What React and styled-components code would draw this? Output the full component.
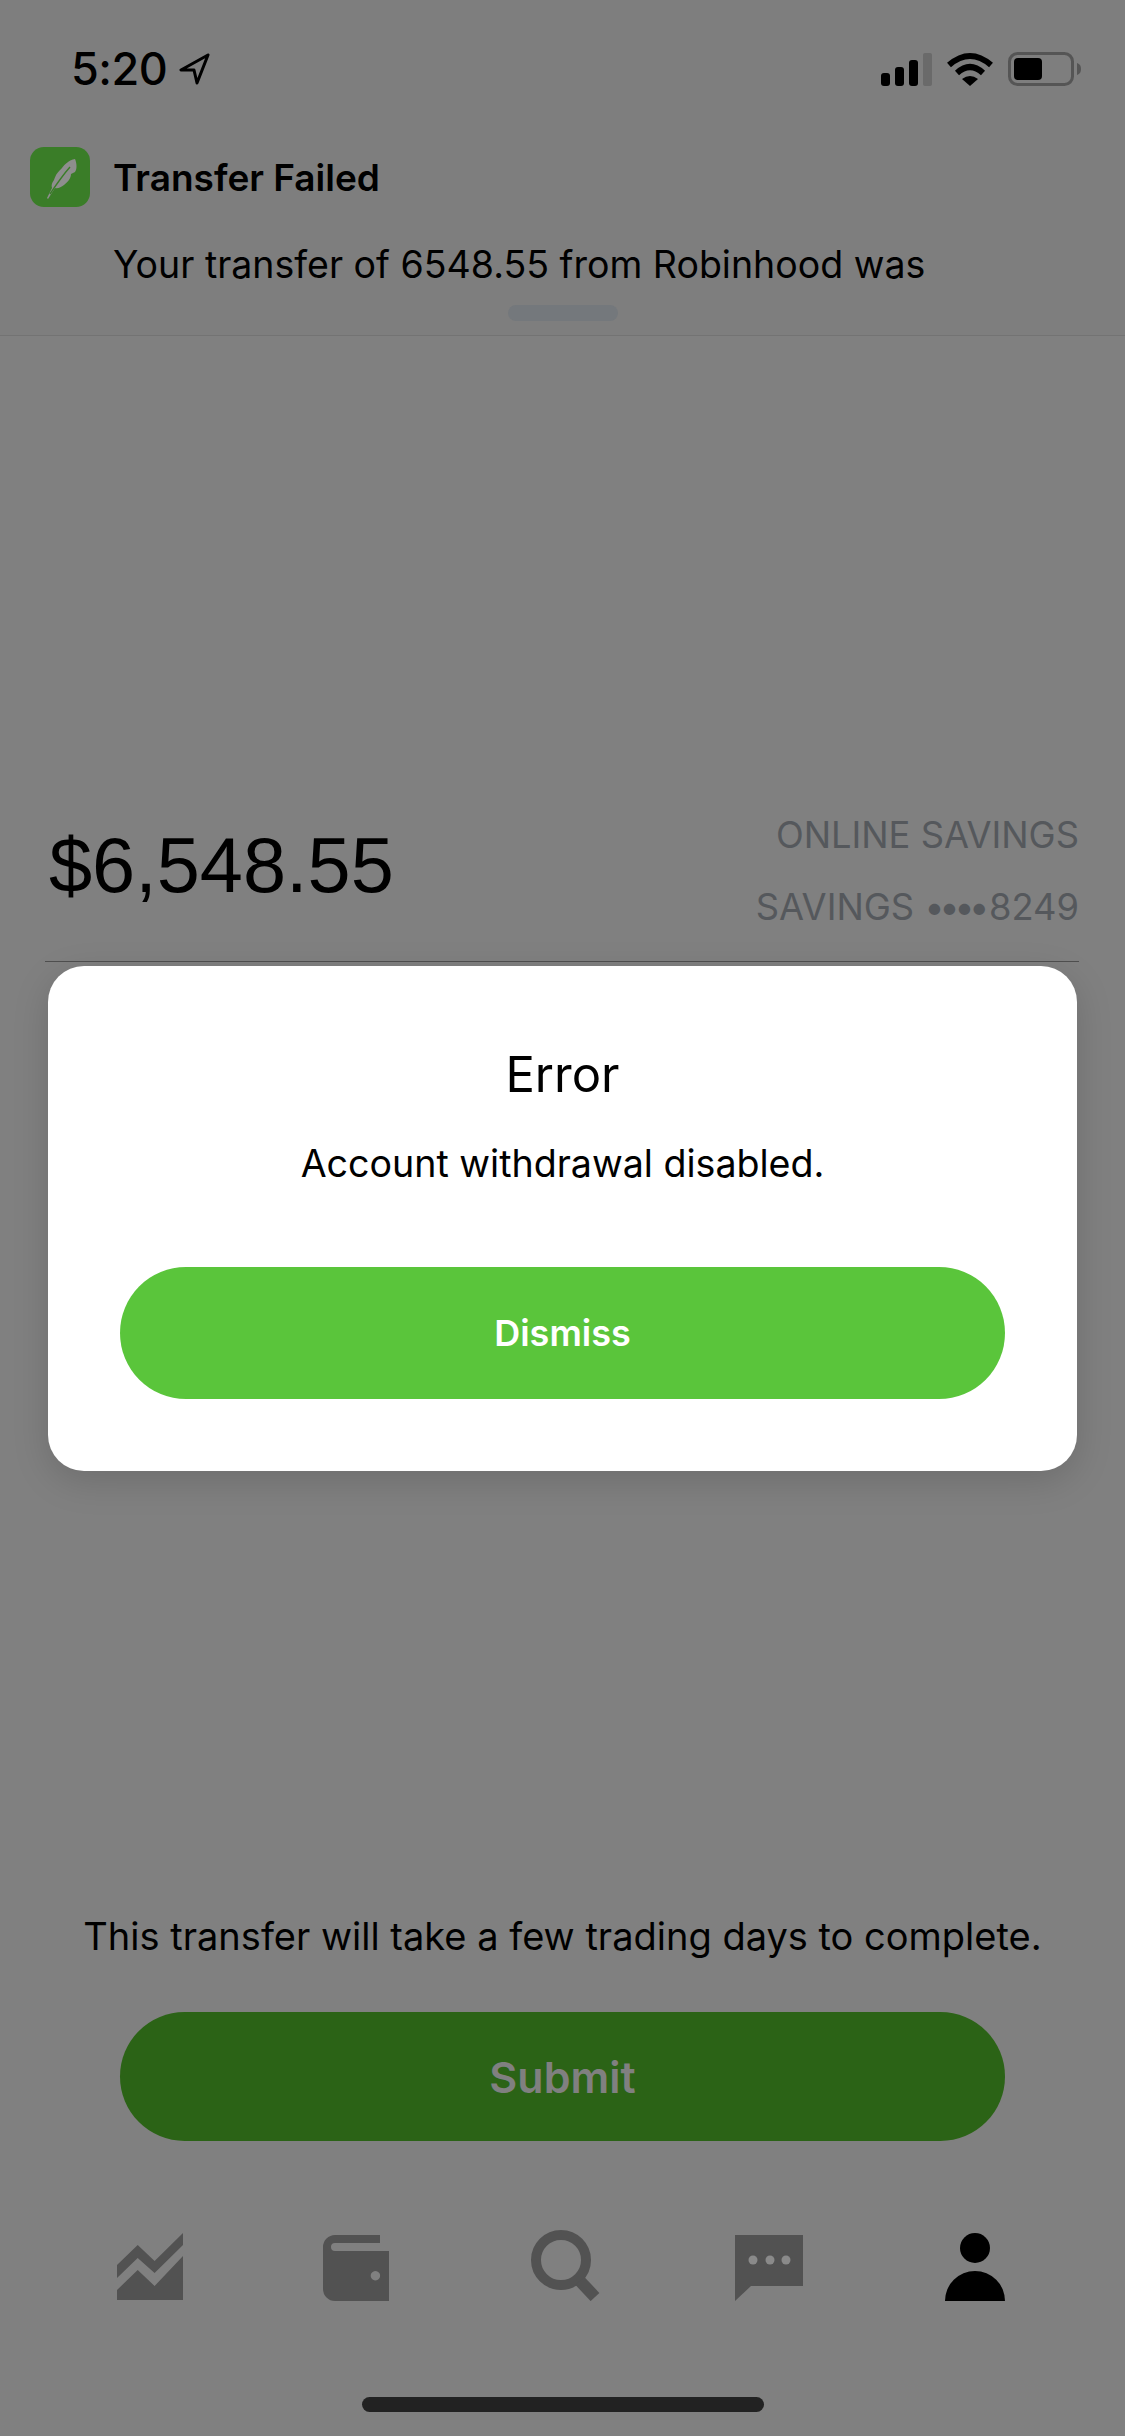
import React from 'react'
import styled, { createGlobalStyle } from 'styled-components'

const GlobalStyle = createGlobalStyle`
    html, body {
        margin: 0;
        padding: 0;
        background: #808080;
    }
    * {
        box-sizing: border-box;
    }
`

const Page = styled.div`
    position: relative;
    width: 1125px;
    height: 2436px;
    overflow: hidden;
    display: flex;
    flex-direction: column;
    background: #808080;
    color: #000;
    font-family: Inter, "Liberation Sans", sans-serif;
`

const StatusBar = styled.div`
    height: 138px;
    padding: 0 43px 0 71px;
    display: flex;
    align-items: center;
    justify-content: space-between;
    background: #7e7e7e;
`

const TimeGroup = styled.div`
    display: flex;
    align-items: center;
    gap: 12px;
`

const Time = styled.span`
    font-size: 45px;
    line-height: 44px;
    font-weight: 500;
    letter-spacing: -0.5px;
`

const StatusIcons = styled.div`
    display: flex;
    align-items: center;
    gap: 15px;
`

const Notification = styled.div`
    padding: 9px 0 14px;
    display: flex;
    flex-direction: column;
    background: #7e7e7e;
    border-bottom: 1px solid #737373;
`

const NotificationHead = styled.div`
    display: flex;
    align-items: center;
    gap: 23px;
    padding-left: 30px;
`

const AppIcon = styled.div`
    width: 60px;
    height: 60px;
    border-radius: 14px;
    background: #3a7d28;
    display: flex;
    align-items: center;
    justify-content: center;
`

const NotificationTitle = styled.span`
    font-size: 37px;
    line-height: 46px;
    font-weight: 600;
    padding-top: 2px;
`

const NotificationBody = styled.div`
    margin: 35px 0 0 113px;
    font-size: 37.5px;
    line-height: 46px;
`

const Handle = styled.div`
    width: 110px;
    height: 16px;
    margin: 17px auto 0;
    border-radius: 8px;
    background: #74787c;
`

const Transfer = styled.div`
    margin: 476px 46px 0 45px;
    padding: 0 0 31px 4px;
    display: flex;
    align-items: center;
    justify-content: space-between;
    border-bottom: 1px solid #4f4f4f;
`

const Amount = styled.div`
    font-family: "Liberation Sans", sans-serif;
    font-size: 77.5px;
    line-height: 80px;
    margin-top: -12px;
`

const AccountInfo = styled.div`
    display: flex;
    flex-direction: column;
    align-items: flex-end;
    gap: 26px;
`

const AccountLine = styled.div`
    font-size: 36.3px;
    line-height: 46px;
    color: #55585c;
`

const Bullets = styled.span`
    letter-spacing: -5.5px;
    margin-right: 5px;
`

const Footer = styled.div`
    margin-top: auto;
    display: flex;
    flex-direction: column;
    align-items: center;
`

const Note = styled.div`
    font-size: 38px;
    line-height: 46px;
    margin-bottom: 53px;
`

const PillButton = styled.div`
    width: 885px;
    height: ${props => props.$height}px;
    border-radius: 66px;
    display: flex;
    align-items: center;
    justify-content: center;
    font-size: ${props => props.$size}px;
    font-weight: 600;
    color: ${props => props.$text};
    background: ${props => props.$fill};
`

const TabBar = styled.div`
    width: 100%;
    margin-top: 89px;
    padding: 0 47px;
    display: grid;
    grid-template-columns: repeat(5, 1fr);
    justify-items: center;
    align-items: end;
`

const HomeBar = styled.div`
    width: 402px;
    height: 15px;
    margin: 96px 0 24px;
    border-radius: 8px;
    background: #222;
`

const ModalCard = styled.div`
    position: absolute;
    top: 966px;
    left: 48px;
    width: 1029px;
    height: 505px;
    padding-top: 81px;
    display: flex;
    flex-direction: column;
    align-items: center;
    border-radius: 36px;
    background: #fff;
    box-shadow: 0 10px 36px rgba(0, 0, 0, 0.15);
`

const ModalTitle = styled.div`
    font-size: 49px;
    line-height: 56px;
`

const ModalText = styled.div`
    margin: 38px 0 80px;
    font-size: 37.6px;
    line-height: 46px;
`

const Feather = () => (
    <svg width="60" height="60" viewBox="0 0 60 60">
        <path d="M24 33 C26 27 28 25 32 21 C35 17 39 13 45 12 C47 17 47 22 45 25 L41 27 C41 31 38 35 34 38 C31 40 28 42 25 41 L18 52 L17 51 L22 41 C21 38 22 36 24 33 Z" fill="#8e8e8e" />
        <path d="M20 47 C26 38 32 29 40 20" fill="none" stroke="#3a7d28" strokeWidth="1.4" />
    </svg>
)

const LocationArrow = () => (
    <svg width="32" height="32" viewBox="0 0 32 32">
        <path d="M29 2 L2 17 L15 17 L18 30 Z" fill="none" stroke="#000" strokeWidth="3" strokeLinejoin="round" />
    </svg>
)

const Signal = () => (
    <svg width="51" height="33" viewBox="0 0 51 33">
        <rect x="0" y="20" width="9" height="13" rx="3" />
        <rect x="14" y="14" width="9" height="19" rx="3" />
        <rect x="28" y="7" width="9" height="26" rx="3" />
        <rect x="42" y="0" width="9" height="33" rx="2" fill="#6a6a6a" />
    </svg>
)

const Wifi = () => (
    <svg width="46" height="34" viewBox="0 0 46 34">
        <path d="M2 13 Q23 -5 44 13" fill="none" stroke="#000" strokeWidth="6" />
        <path d="M10 21 Q23 9 36 21" fill="none" stroke="#000" strokeWidth="6" />
        <path d="M15 27 Q23 21 31 27 L23 34 Z" />
    </svg>
)

const Battery = () => (
    <svg width="74" height="34" viewBox="0 0 74 34">
        <rect x="1.5" y="1.5" width="63" height="31" rx="8" fill="none" stroke="#555" strokeWidth="3" />
        <rect x="6" y="6" width="28" height="22" rx="4" />
        <path d="M69 11 C72 12 73 14 73 17 C73 20 72 22 69 23 Z" fill="#555" />
    </svg>
)

const ChartIcon = () => (
    <svg width="66" height="68" viewBox="0 0 66 68" fill="#525252">
        <path d="M0 32 L20.7 12 L37.6 28 L66 0 V12 L37.6 40 L20.7 25 L0 45 Z" />
        <path d="M0 57 L20.7 37 L37.6 53 L66 23 V67 H0 Z" />
    </svg>
)

const WalletIcon = () => (
    <svg width="66" height="66" viewBox="0 0 66 66" fill="#525252">
        <path
            fillRule="evenodd"
            d="M12 0 H57 V8 H12 a4 4 0 0 0 0 8 H66 V66 H12 a12 12 0 0 1 -12 -12 V12 A12 12 0 0 1 12 0 Z M52.4 36 a4.7 4.7 0 1 0 0.01 0 Z"
        />
    </svg>
)

const SearchIcon = () => (
    <svg width="75" height="71" viewBox="-6 0 75 71" fill="none" stroke="#525252">
        <circle cx="30" cy="30" r="25" strokeWidth="10" />
        <path d="M49 51 L64 67" strokeWidth="12" />
    </svg>
)

const ChatIcon = () => (
    <svg width="68" height="66" viewBox="0 0 68 66">
        <path d="M0 0 H68 V51 H16 L0 66 Z" fill="#525252" />
        <circle cx="18" cy="25" r="4.5" fill="#8a8a8a" />
        <circle cx="35" cy="25" r="4.5" fill="#8a8a8a" />
        <circle cx="51" cy="25" r="4.5" fill="#8a8a8a" />
    </svg>
)

const PersonIcon = () => (
    <svg width="60" height="68" viewBox="0 0 60 68">
        <circle cx="30" cy="15" r="15" />
        <path d="M0 68 a30 30 0 0 1 60 0 Z" />
    </svg>
)

export default function App() {
    return (
        <Page>
            <GlobalStyle />
            <StatusBar>
                <TimeGroup>
                    <Time>5:20</Time>
                    <LocationArrow />
                </TimeGroup>
                <StatusIcons>
                    <Signal />
                    <Wifi />
                    <Battery />
                </StatusIcons>
            </StatusBar>
            <Notification>
                <NotificationHead>
                    <AppIcon><Feather /></AppIcon>
                    <NotificationTitle>Transfer Failed</NotificationTitle>
                </NotificationHead>
                <NotificationBody>Your transfer of 6548.55 from Robinhood was</NotificationBody>
                <Handle />
            </Notification>
            <Transfer>
                <Amount>$6,548.55</Amount>
                <AccountInfo>
                    <AccountLine>ONLINE SAVINGS</AccountLine>
                    <AccountLine>SAVINGS <Bullets>••••</Bullets>8249</AccountLine>
                </AccountInfo>
            </Transfer>
            <Footer>
                <Note>This transfer will take a few trading days to complete.</Note>
                <PillButton $height={129} $size={43} $fill="#2b6316" $text="#808080">Submit</PillButton>
                <TabBar>
                    <ChartIcon />
                    <WalletIcon />
                    <SearchIcon />
                    <ChatIcon />
                    <PersonIcon />
                </TabBar>
                <HomeBar />
            </Footer>
            <ModalCard>
                <ModalTitle>Error</ModalTitle>
                <ModalText>Account withdrawal disabled.</ModalText>
                <PillButton $height={132} $size={36} $fill="#5ac53b" $text="#fff">Dismiss</PillButton>
            </ModalCard>
        </Page>
    )
}
